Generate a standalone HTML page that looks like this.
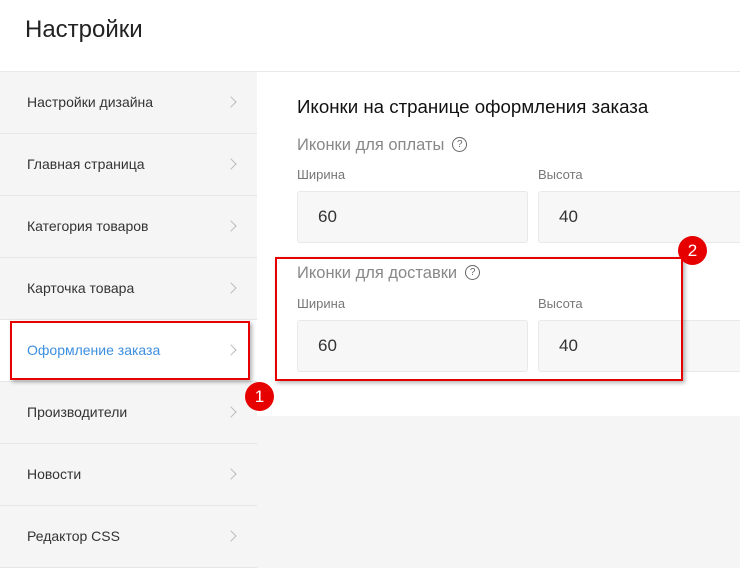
<!DOCTYPE html>
<html><head><meta charset="utf-8"><style>
*{margin:0;padding:0;box-sizing:border-box}
body{width:740px;height:560px;overflow:hidden;background:#f5f5f5;font-family:"Liberation Sans",sans-serif;position:relative}
.hdr{position:absolute;left:0;top:0;width:740px;height:72px;background:#fff;border-bottom:1px solid #e8e8e8}
.hdr h1{position:absolute;left:25px;top:16px;font-size:24px;font-weight:normal;color:#222}
.side{position:absolute;left:0;top:72px;width:257px}
.it{height:62px;border-bottom:1px solid #e6e6e6;position:relative;font-size:14px;color:#333;line-height:61px;padding-left:27px}
.it.a{background:#fff;color:#3d8fe0}
.it:after{content:"";position:absolute;right:22px;top:26px;width:7px;height:7px;border-right:1.5px solid #bbb;border-top:1.5px solid #bbb;transform:rotate(45deg)}
.main{position:absolute;left:257px;top:72px;width:483px;height:344px;background:#fff}
.t{position:absolute;font-size:18.7px;color:#111}
.s{position:absolute;font-size:16.5px;color:#888}
.l{position:absolute;font-size:13px;color:#777}
.in{position:absolute;height:52px;background:#f7f7f7;border:1px solid #e9e9e9;border-radius:3px;font-size:17px;color:#333;padding-left:20px;line-height:50px}
.q{display:inline-block;width:15px;height:15px;border:1.3px solid #666;border-radius:50%;font-size:10px;line-height:13px;text-align:center;color:#666;vertical-align:middle;margin-left:8px;margin-top:-3px}
.rb{position:absolute;border:2px solid #e60000;box-shadow:2px 2px 4px rgba(0,0,0,.3)}
.bd{position:absolute;width:29px;height:29px;border-radius:50%;background:#e60000;color:#fff;font-size:17px;text-align:center;line-height:29px}
</style></head><body>
<div class="hdr"><h1>Настройки</h1></div>
<div class="side">
<div class="it">Настройки дизайна</div>
<div class="it">Главная страница</div>
<div class="it">Категория товаров</div>
<div class="it">Карточка товара</div>
<div class="it a">Оформление заказа</div>
<div class="it">Производители</div>
<div class="it">Новости</div>
<div class="it">Редактор CSS</div>
</div>
<div class="main"></div>
<div class="t" style="left:297px;top:96px">Иконки на странице оформления заказа</div>
<div class="s" style="left:297px;top:136px">Иконки для оплаты<span class="q">?</span></div>
<div class="l" style="left:297px;top:167px">Ширина</div>
<div class="l" style="left:538px;top:167px">Высота</div>
<div class="in" style="left:297px;top:191px;width:231px">60</div>
<div class="in" style="left:538px;top:191px;width:220px">40</div>
<div class="s" style="left:297px;top:264px">Иконки для доставки<span class="q">?</span></div>
<div class="l" style="left:297px;top:296px">Ширина</div>
<div class="l" style="left:538px;top:296px">Высота</div>
<div class="in" style="left:297px;top:320px;width:231px">60</div>
<div class="in" style="left:538px;top:320px;width:220px">40</div>
<div class="rb" style="left:10px;top:321px;width:240px;height:59px"></div>
<div class="rb" style="left:275px;top:257px;width:408px;height:124px"></div>
<div class="bd" style="left:245px;top:382px">1</div>
<div class="bd" style="left:678px;top:236px">2</div>
</body></html>
